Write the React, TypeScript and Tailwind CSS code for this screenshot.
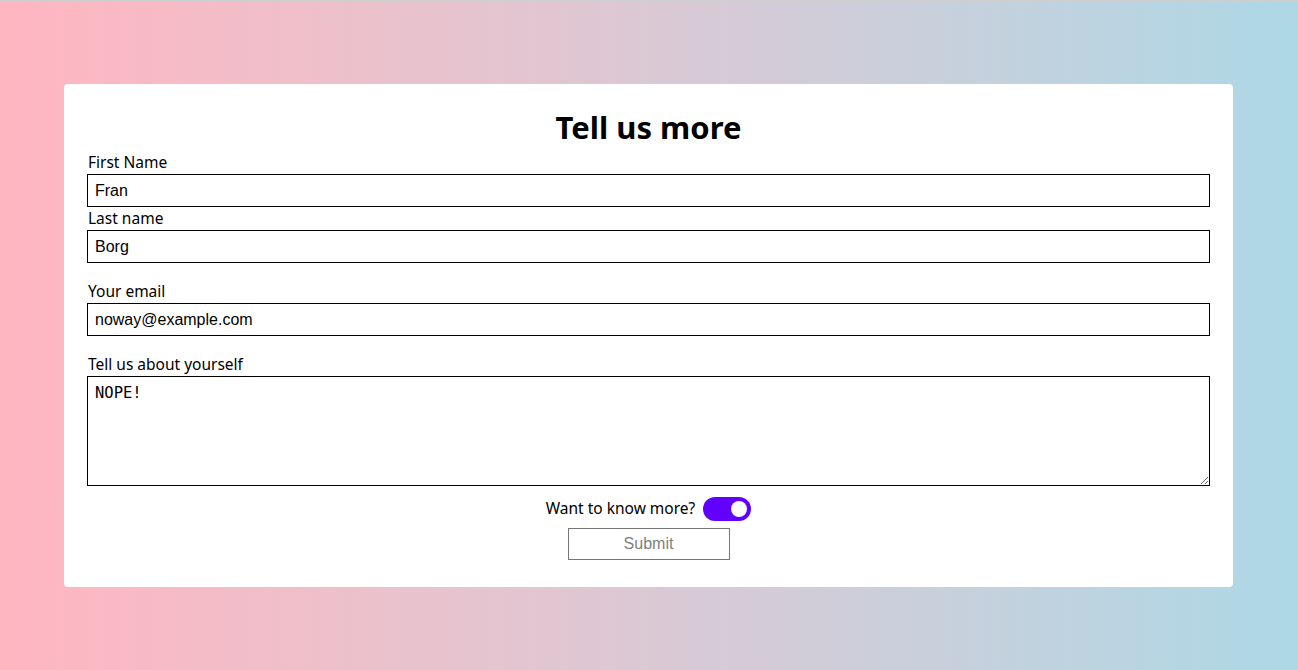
import { useState } from "react";

const fieldCls =
  "block w-full h-[33px] border border-black px-[7px] text-[16px] text-black outline-none font-['Liberation_Sans',Arial,sans-serif]";
const labelCls = "block h-[23px] pl-[1px] leading-[22px] text-[15.5px] text-black";

export default function App() {
  const [more, setMore] = useState(true);

  return (
    <div className="min-h-screen h-[670px] border-t border-[#cfcfcf] bg-gradient-to-r from-[#ffb6c1] to-[#add8e6] pt-[83px] font-['Noto_Sans',sans-serif]">
      <form
        className="ml-[64px] w-[1169px] rounded-[4px] bg-white px-[23px] pt-[21px] pb-[27px]"
        onSubmit={(e) => e.preventDefault()}
      >
        <h1 className="h-[44px] text-center text-[31px] font-bold leading-[44px] text-black">
          Tell us more
        </h1>

        <div className="mt-[2px]">
          <label className={labelCls}>First Name</label>
          <input className={fieldCls} defaultValue="Fran" />
        </div>
        <div>
          <label className={labelCls}>Last name</label>
          <input className={fieldCls} defaultValue="Borg" />
        </div>

        <div className="mt-[17px]">
          <label className={labelCls}>Your email</label>
          <input className={fieldCls} type="email" defaultValue="noway@example.com" />
        </div>

        <div className="mt-[17px]">
          <label className={labelCls}>Tell us about yourself</label>
          <textarea
            className="block h-[110px] w-full border border-black px-[7px] pt-[5px] pb-[4px] text-[15.5px] text-black outline-none font-['DejaVu_Sans_Mono',monospace]"
            defaultValue="NOPE!"
          />
        </div>

        <div className="mt-[11px] flex items-center justify-center gap-[8px]">
          <span className="text-[15.5px] text-black">Want to know more?</span>
          <button
            type="button"
            onClick={() => setMore(!more)}
            className={
              more
                ? "flex h-[24px] w-[48px] items-center justify-end rounded-full bg-[#6200ff] px-[4px]"
                : "flex h-[24px] w-[48px] items-center justify-start rounded-full bg-[#cccccc] px-[4px]"
            }
          >
            <span className="block h-[16px] w-[16px] rounded-full bg-white" />
          </button>
        </div>

        <div className="mt-[7px] flex justify-center">
          <button
            type="submit"
            className="h-[32px] w-[162px] border border-[#767676] bg-white text-[16px] text-[#808080] font-['Liberation_Sans',Arial,sans-serif]"
          >
            Submit
          </button>
        </div>
      </form>
    </div>
  );
}
